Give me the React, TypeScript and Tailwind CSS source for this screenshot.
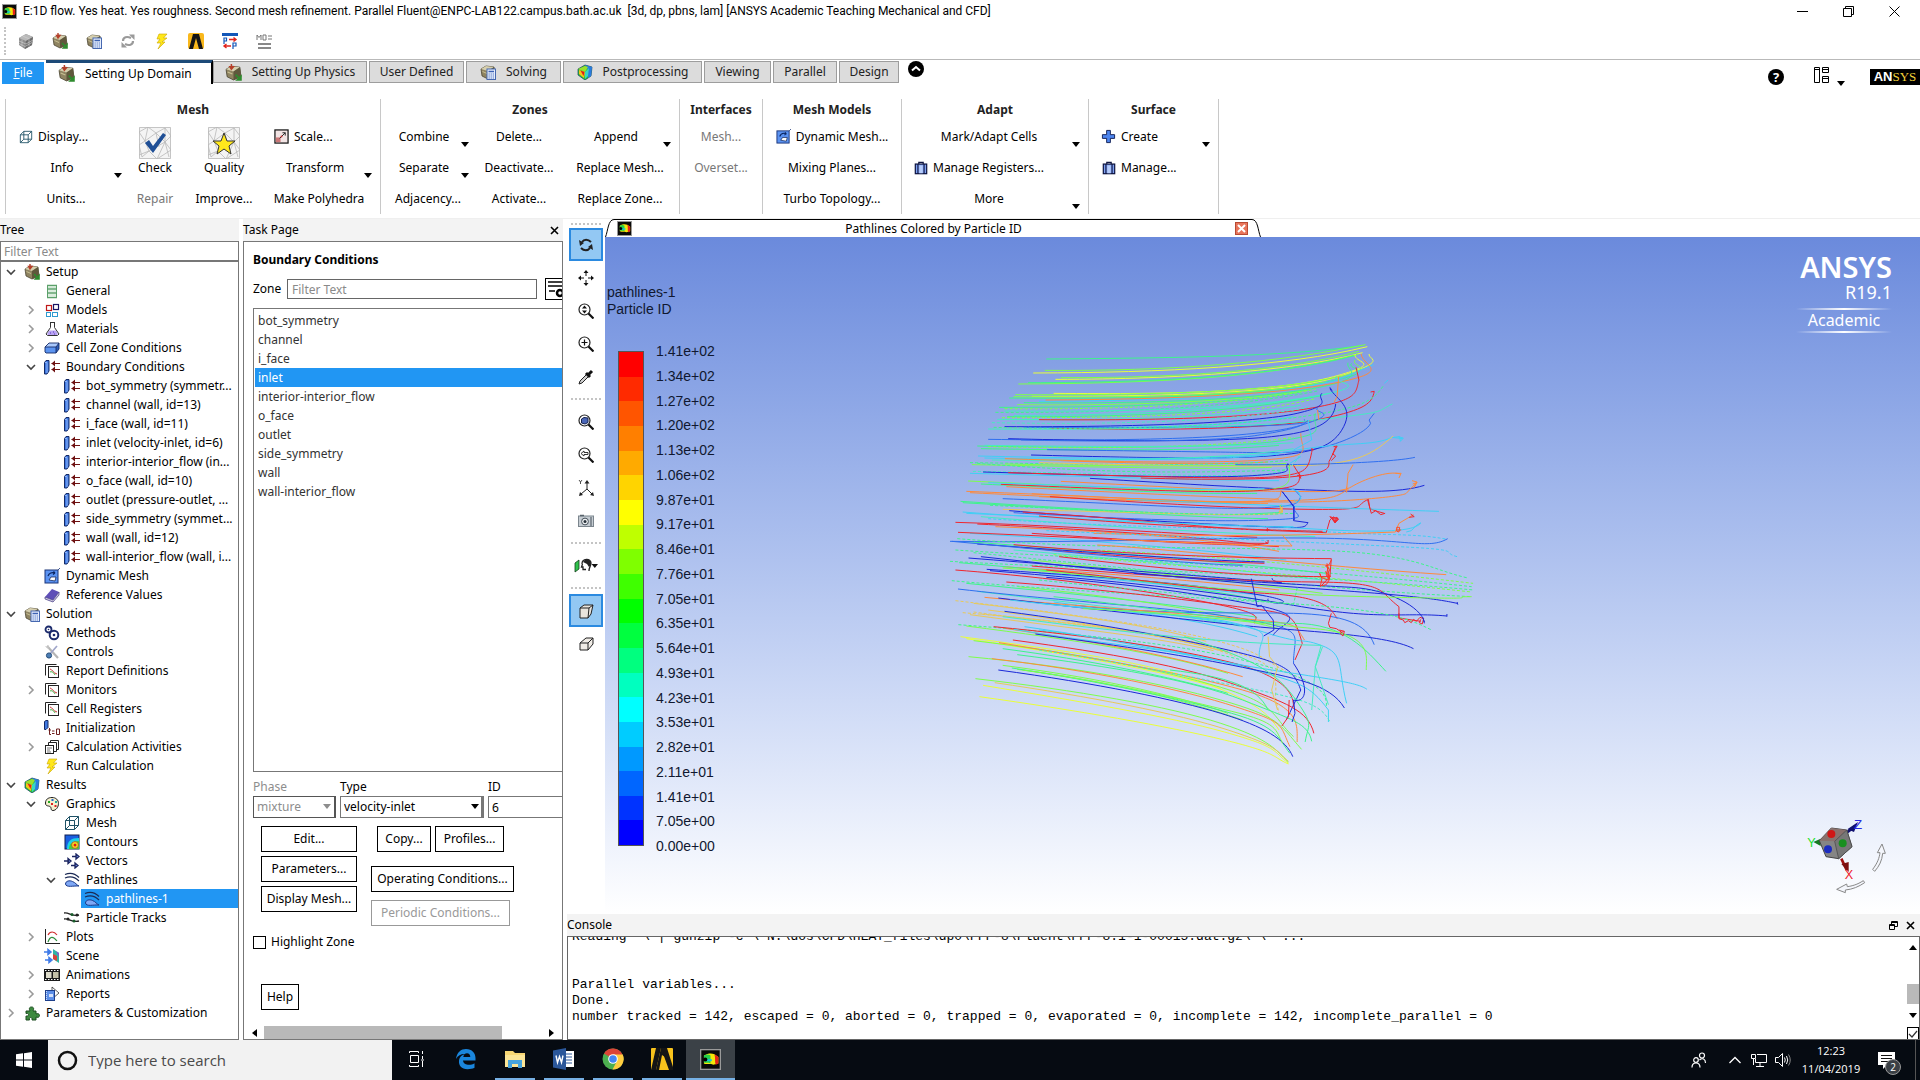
import React from "react";

type IconProps = { size?: number; className?: string };

function Svg({ size = 16, box = 16, className = "", children }: IconProps & { box?: number; children?: React.ReactNode }) {
  return (
    <svg width={size} height={size} viewBox={`0 0 ${box} ${box}`} className={`shrink-0 ${className}`} fill="none" aria-hidden="true">
      {children}
    </svg>
  );
}

const BrickCube = (p: IconProps) => (
  <Svg {...p}>
    <path d="M1 5 8 1l7 3-1 8-7 4-6-4z" fill="#8e8e8e" />
    <path d="M1 5 8 1l7 3-7 4z" fill="#b9b9b9" />
    <path d="m8 8 7-4-1 8-7 4z" fill="#6c6c6c" />
    <path d="M1 8l7 3 7-4M1 10.500l6 3 7-4M4 6.500v7M11 6.500v7M4.500 3l7 3" stroke="#d4d4d4" strokeWidth=".6" />
  </Svg>
);
const TanCube = () => (
  <>
    <path d="M1 5 6 2l8 1 1 9-7 3-6-3z" fill="#8f8462" stroke="#3f3a26" strokeWidth=".7" />
    <path d="M1 5 6 2l8 1-6 4z" fill="#d6cfae" />
    <path d="m8 7 6-4 1 9-7 3z" fill="#5f583c" />
    <path d="M2.500 7.500 7 9.500" stroke="#c9c093" />
  </>
);
const SetupIcon = (p: IconProps) => (
  <Svg {...p}>
    <TanCube />
    <path d="M6 0v3M4.500 2.500l1.500 2.500 2-2.500z" stroke="#b5402a" strokeWidth="1.400" fill="#b5402a" />
    <path d="M10 10l4 4M15 11.500v3.500h-3.500z" stroke="#2e8b2e" strokeWidth="1.600" fill="#2e8b2e" />
  </Svg>
);
const SolutionIcon = (p: IconProps) => (
  <Svg {...p}>
    <TanCube />
    <rect x="7" y="5" width="8.500" height="10.500" fill="#e6eefc" stroke="#4668b0" />
    <path d="M8.500 7.500h5.500" stroke="#3c62b4" strokeWidth="1.500" />
    <path d="M8.500 10h5.500M8.500 12h5.500M8.500 14h5.500" stroke="#5579c6" strokeDasharray="1.300 .8" />
  </Svg>
);
const ResultsIcon = (p: IconProps) => (
  <Svg {...p}>
    <path d="M1 5 8 1l7 2-1 9-6 4-7-5z" fill="#27c23a" stroke="#1a3b66" strokeWidth=".7" />
    <path d="M8 1l7 2-1 9-3 2V6z" fill="#2a7be0" />
    <path d="M1 5 8 2l3 1-3 5z" fill="#9be02d" />
    <path d="M8 8l4-4-1 8-3 3z" fill="#39d7c3" />
    <path d="M2 6l6 2-1 6-5-4z" fill="#f5c518" />
    <path d="M3.500 6.500 7.500 8 6.500 12z" fill="#e01b1b" />
  </Svg>
);
const RefreshGray = (p: IconProps) => (
  <Svg {...p}>
    <path d="M3 8c0-4 4-5 8-3M13 8c0 4-4 5-8 3" stroke="#9a9a9a" strokeWidth="2.200" />
    <path d="M9 1.500h5.500V7zM7 14.500H1.500V9z" fill="#9a9a9a" />
  </Svg>
);
const Bolt = (p: IconProps) => (
  <Svg {...p}>
    <path d="M5 1h8L9.500 5H13L8 9h3l-7 7 3-6H3l3-4H3z" fill="#ffe71a" stroke="#c9a400" strokeWidth=".6" />
  </Svg>
);
const AnsysA = (p: IconProps) => (
  <Svg {...p}>
    <rect x="0" y="0" width="16" height="16" rx="2" fill="#f9b81c" />
    <path d="M1 16 5 1h6l4 15h-4L8 5 5 16z" fill="#151515" />
  </Svg>
);
const PpIcon = (p: IconProps) => (
  <Svg {...p}>
    <path d="M0 1.500h16" stroke="#1357b8" strokeWidth="3" />
    <path d="M2 11V5h2.500v3H2M11 16v-6h3v3h-3" stroke="#1357b8" strokeWidth="1.200" />
    <path d="M7 6.500h7M11.500 4.500l2.500 2-2.500 2M9 13H2M4.500 11 2 13l2.500 2" stroke="#e0231b" strokeWidth="1.400" />
  </Svg>
);
const MonIcon = (p: IconProps) => (
  <Svg {...p}>
    <path d="M1 7V2l2 2.500L5 2v5M7 2h3v5H7zM12 3h4M12 6h4" stroke="#777" />
    <path d="M2 11h13M2 15h13" stroke="#888" strokeWidth="2" />
  </Svg>
);
const FluentIcon = (p: IconProps) => (
  <Svg {...p}>
    <rect x=".5" y=".5" width="15" height="15" fill="#0a0a0a" stroke="#9a9a9a" />
    <path d="M3 5c3-2 6-2 8-1l3 2v5l-4 1c-2-1-5 0-7-1z" fill="#f4e80a" />
    <path d="M3 5c2-1 4-1 5 0v6c-2-1-4 0-5-1z" fill="#25d04b" />
    <path d="M11 4l3 2v5l-2 1c-1-2 0-5-1-8z" fill="#e6241a" />
    <path d="M4 8.500h5" stroke="#14c4e0" strokeWidth="1.500" />
    <circle cx="4" cy="8" r="1.600" fill="#000" />
  </Svg>
);
const WireCube = (p: IconProps) => (
  <Svg {...p}>
    <path d="M1.500 5.500h9v9h-9zM5.500 1.500h9v9h-9zM1.500 5.500l4-4M10.500 5.500l4-4M1.500 14.500l4-4M10.500 14.500l4-4" stroke="#1f5266" />
  </Svg>
);
const ScaleIcon = (p: IconProps) => (
  <Svg {...p}>
    <rect x="1" y="1" width="14" height="14" fill="#f2e4e4" stroke="#111" strokeWidth="1.300" />
    <rect x="2" y="9" width="5" height="5" fill="#c77" />
    <path d="M6 10 12 4M9 4h3v3" stroke="#222" />
    <circle cx="8" cy="8" r="1" fill="#b22" />
  </Svg>
);
const MeshBack = () => (
  <>
    <rect width="32" height="32" fill="#f4f4f4" />
    <path
      d="M0 5 9 0l8 6 9-5 6 8M0 5l6 9 11-8 9 9 6-6M0 18l6-4 4 10 16-9 6 8M0 18l3 12 7-6 8 8 8-17 4 15M9 0l-3 14M17 6l3 14M0 28l10-4M32 23l-14 9M26 1v14M.5.5v31M31.500.5v31M.5 31.500h31M.5.5h31"
      stroke="#b9b9b9"
      strokeWidth=".8"
    />
  </>
);
const CheckBig = () => (
  <Svg size={32} box={32}>
    <MeshBack />
    <path d="M6 16l4-3 4 6L24 6l3 2-13 18z" fill="#1f4f96" />
  </Svg>
);
const StarBig = () => (
  <Svg size={32} box={32}>
    <MeshBack />
    <path d="M16 6l3 8h8l-6 5 2 8-7-5-7 5 2-8-6-5h8z" fill="#ffe81c" stroke="#333" />
  </Svg>
);
const DynMesh = (p: IconProps) => (
  <Svg {...p}>
    <rect x="1" y="2" width="13" height="13" fill="#5b93f2" stroke="#1a3478" />
    <path d="M14 2l2-2" stroke="#1a3478" strokeWidth=".8" />
    <path d="M4 8c1-3 4-4 7-3L9.500 3.500M11 5 9 6.500" stroke="#0b2560" strokeWidth="1.200" />
    <path d="M5 12l2-3h5l-1 4z" fill="#fff" stroke="#16295c" strokeWidth=".8" />
  </Svg>
);
const Briefcase = (p: IconProps) => (
  <Svg {...p}>
    <path d="M5.500 4V1.500h5V4" stroke="#0e1440" strokeWidth="1.400" />
    <rect x="1.500" y="3.500" width="13" height="11" fill="#7da0f2" stroke="#0e1440" strokeWidth="1.400" />
    <path d="M6 5h4v9H6z" fill="#b7cdfb" />
    <path d="M4.500 3.500v11M11.500 3.500v11" stroke="#0e1440" strokeWidth="1.300" />
  </Svg>
);
const PlusIcon = (p: IconProps) => (
  <Svg {...p}>
    <path d="M6 1.500h4V6h4.500v4H10v4.500H6V10H1.500V6H6z" fill="#4d85ee" stroke="#101f55" />
  </Svg>
);
const GeneralIcon = (p: IconProps) => (
  <Svg {...p}>
    <path d="M3.500 2v13M12.500 2v13" stroke="#5ba06a" />
    <path d="M3 2.500h10M3 6h10M3 10h10M3 14.500h10" stroke="#5ba06a" strokeWidth="1.600" />
    <path d="M4 4.200h8M4 8h8M4 12h8" stroke="#cfe8d4" strokeWidth="1.500" />
  </Svg>
);
const ModelsIcon = (p: IconProps) => (
  <Svg {...p}>
    <rect x="2.500" y="3.500" width="5" height="5" stroke="#c01818" strokeWidth="1.200" />
    <rect x="9.500" y="2.500" width="5" height="5" stroke="#1b1464" strokeWidth="1.200" />
    <rect x="2.500" y="10.500" width="4" height="4" stroke="#2e9ad0" />
    <rect x="8.500" y="10.500" width="5" height="4" stroke="#2e9ad0" />
  </Svg>
);
const Flask = (p: IconProps) => (
  <Svg {...p}>
    <path d="M5 9.500h7l2 3.500-1 1H4l-1-1z" fill="#b9a4f2" />
    <path d="M6 1.500h5M6.500 2v4.500L2 13l1.500 1.500h10L15 13l-4.500-6.500V2" stroke="#333" />
    <path d="M6 12h1M9 11h1M10 13h1" stroke="#5a35c0" />
  </Svg>
);
const CellZone = (p: IconProps) => (
  <Svg {...p}>
    <path d="M1 7l4-4h10l-3 4z" fill="#a9c8fb" />
    <path d="M1 7h11v6H2L1 12z" fill="#5c94f0" />
    <path d="M12 7l3-4v6l-3 4z" fill="#2b5cb8" />
    <path d="M1 7l4-4h10v6l-3 4H2L1 12zM1 7h11v6M12 7l3-4" stroke="#142a66" strokeWidth=".9" />
  </Svg>
);
const Boundary = (p: IconProps) => (
  <Svg {...p}>
    <path d="M.5 3.500 2 1.500h3V12l-2 3H.5z" fill="#3f78e0" stroke="#142a66" />
    <path d="M1 3.500h2V14" stroke="#8fb4f7" />
    <path d="M7.500 4.500H16M7.500 10.500H16" stroke="#6e1010" strokeWidth="1.200" />
    <path d="M11 1.500v6l-3.500-3zM11 7.500v6l-3.500-3z" fill="#6e1010" />
  </Svg>
);
const Book = (p: IconProps) => (
  <Svg {...p}>
    <path d="M1 10 8 2l7 3-6 8z" fill="#5f4fb8" />
    <path d="M1 10l8 3 6-8v3l-6 7-8-3z" fill="#cfcadf" stroke="#3b3080" strokeWidth=".7" />
  </Svg>
);
const Gears = (p: IconProps) => (
  <Svg {...p}>
    <circle cx="4.500" cy="4.500" r="3" stroke="#1b2a6b" strokeWidth="1.800" />
    <circle cx="10" cy="10" r="4.300" stroke="#1b2a6b" strokeWidth="2" fill="#fff" />
    <circle cx="10" cy="10" r="1.300" fill="#1b2a6b" />
    <circle cx="4.500" cy="4.500" r=".8" fill="#1b2a6b" />
  </Svg>
);
const Tools = (p: IconProps) => (
  <Svg {...p}>
    <path d="M3 2l11 12" stroke="#b5b5b5" strokeWidth="2.200" />
    <path d="M13 2 6 10" stroke="#9fa5c9" strokeWidth="1.600" />
    <circle cx="5" cy="11.500" r="2.600" fill="#4d7fb5" stroke="#29507c" />
    <path d="M1.500 2.500l3 2M4 1v3" stroke="#c9c9c9" />
  </Svg>
);
const Report = (p: IconProps) => (
  <Svg {...p}>
    <path d="M1.500 12.500v-11h11" stroke="#222" />
    <rect x="4.500" y="3.500" width="10" height="11" fill="#fdfdfd" stroke="#222" />
    <path d="M6 6c2 0 3 4 7 5" stroke="#c33" />
    <path d="M6 9c2-1 4 1 5 3" stroke="#3a3" />
  </Svg>
);
const InitIcon = (p: IconProps) => (
  <Svg {...p}>
    <path d="M.5 1.500 2 .5h2v7l-2 2H.5z" fill="#3f78e0" stroke="#142a66" />
    <path d="M5.500 8v6.500h1.500M4.500 10h2.500M8 11h2.500M8 13.500h2.500M12.500 9h3v5.500h-3z" stroke="#6e1f1f" />
  </Svg>
);
const CalcAct = (p: IconProps) => (
  <Svg {...p}>
    <path d="M6.500 4V1.500h8v9H12" stroke="#222" />
    <path d="M4.500 6V3.500h8v9H10" stroke="#222" fill="#fff" />
    <rect x="1.500" y="6.500" width="8" height="8" fill="#fff" stroke="#222" />
    <path d="M3 9h5M3 11h3M3 13h4" stroke="#777" />
  </Svg>
);
const Palette = (p: IconProps) => (
  <Svg {...p}>
    <path d="M8 1.500c4 0 6.500 2.500 6.500 6S12 14.500 9 14.500s-1-3-3-4-4.500 0-4.500-3.500S4 1.500 8 1.500z" fill="#f5f0cf" stroke="#222" />
    <path d="M4 5h2v2H4z" fill="#2a2" />
    <path d="M7.500 3h2v2h-2z" fill="#26c" />
    <path d="M11 5h2v2h-2z" fill="#2a9" />
    <path d="M7 7h2v2H7z" fill="#d22" />
    <path d="M10.500 9h2v2h-2z" fill="#d22" />
  </Svg>
);
const Contours = (p: IconProps) => (
  <Svg {...p}>
    <rect x="1" y="1" width="14" height="14" fill="#1a5fe0" stroke="#0e1f55" />
    <path d="M3 15C3 7 7 4 15 4v11z" fill="#1fd2e6" />
    <path d="M5 15c0-5 3-8 10-8v8z" fill="#3fd23f" />
    <circle cx="11" cy="11" r="3.400" fill="#f8e71c" stroke="#a33" strokeWidth=".7" />
    <circle cx="11" cy="11" r="1.500" fill="#e01b1b" />
  </Svg>
);
const Vectors = (p: IconProps) => (
  <Svg {...p}>
    <path d="M0 8h5M4 5.500 7 8l-3 2.500zM8 3.500h4M12 1l3 2.500L12 6zM7 12.500h4M11 10l3 2.500-3 2.500z" stroke="#1b2560" strokeWidth="1.300" fill="#6f8fe6" />
  </Svg>
);
const PathIcon = (p: IconProps) => (
  <Svg {...p}>
    <path d="M1 2.500c5-2 10-1 14 3M1 6c5-2 10-1 14 3" stroke="#1b2a55" strokeWidth="1.200" />
    <path d="M1.500 12c0-3 4-4 7-2.500 3 1 4 3.500 6.500 4.500-5-.5-13 2-13.500-2z" fill="#7fa8f5" stroke="#1b3a8a" />
  </Svg>
);
const Particle = (p: IconProps) => (
  <Svg {...p}>
    <path d="M0 3c5-1 8 4 15 2M0 9c5-1 8 4 15 2" stroke="#222" strokeWidth="1.400" />
    <circle cx="8" cy="4.500" r="1.500" fill="#175d2a" />
    <circle cx="13" cy="5" r="1.500" fill="#222" />
    <circle cx="4" cy="9" r="1.500" fill="#222" />
    <circle cx="10" cy="11" r="1.500" fill="#175d2a" />
  </Svg>
);
const Plots = (p: IconProps) => (
  <Svg {...p}>
    <path d="M1.500 0v14.500H16" stroke="#222" />
    <path d="M4 6c2-4 6-4 9 0" stroke="#d03030" strokeWidth="1.200" />
    <path d="M4 13c2-6 5-6 9-1" stroke="#2d8d3c" strokeWidth="1.200" />
  </Svg>
);
const Scene = (p: IconProps) => (
  <Svg {...p}>
    <path d="M0 4h5M4 1.500 7 4 4 6.500zM1 12h5M5 9.500 8 12l-3 2.500z" stroke="#3f7be8" strokeWidth="1.500" fill="#3f7be8" />
    <path d="M9 1l6 4v10l-6-4z" fill="#2fb5a5" />
    <path d="M9 6l4 2v5l-4-2z" fill="#d8433b" />
    <path d="M12 3l3 2v4z" fill="#8b57c9" />
  </Svg>
);
const Film = (p: IconProps) => (
  <Svg {...p}>
    <rect x="0" y="2" width="16" height="12" fill="#1b1b1b" />
    <rect x="2" y="5" width="5.500" height="6" fill="#dedccb" />
    <rect x="9" y="5" width="5.500" height="6" fill="#c4c1a8" />
    <path d="M1 3.500h14M1 12.500h14" stroke="#fff" strokeDasharray="1.500 1.500" />
  </Svg>
);
const ReportsIcon = (p: IconProps) => (
  <Svg {...p}>
    <path d="M8 1l7 6-7 6z" fill="#fff" stroke="#333" strokeWidth=".8" />
    <rect x="1.500" y="4.500" width="9" height="10" fill="#5d8fe8" stroke="#1e3f8a" />
    <path d="M5 8h4v3H5z" fill="#d3e1fb" />
    <path d="M2.500 5v9" stroke="#cfdcf7" strokeDasharray="1 1" />
  </Svg>
);
const Puzzle = (p: IconProps) => (
  <Svg {...p}>
    <path d="M2 6h4c-1-2-1-4 1.500-4S10 4 9 6h3v3c2-1 3.500 0 3.500 1.500S14 13 12 12v3H8c.5-2-.5-2.500-1.500-2.500S5 13 5.500 15H2v-4c2 .5 2.500-.5 2.500-1.500S4 8 2 8.500z" fill="#3d8a3f" stroke="#1c4d20" />
  </Svg>
);

/* ---------- data ---------- */

type Node = { label: string; icon: React.FC<IconProps>; level: 0 | 1 | 2 | 3; open?: boolean; closed?: boolean; selected?: boolean };

const tree: Node[] = [
  { label: "Setup", icon: SetupIcon, level: 0, open: true },
  { label: "General", icon: GeneralIcon, level: 1 },
  { label: "Models", icon: ModelsIcon, level: 1, closed: true },
  { label: "Materials", icon: Flask, level: 1, closed: true },
  { label: "Cell Zone Conditions", icon: CellZone, level: 1, closed: true },
  { label: "Boundary Conditions", icon: Boundary, level: 1, open: true },
  { label: "bot_symmetry (symmetr...", icon: Boundary, level: 2 },
  { label: "channel (wall, id=13)", icon: Boundary, level: 2 },
  { label: "i_face (wall, id=11)", icon: Boundary, level: 2 },
  { label: "inlet (velocity-inlet, id=6)", icon: Boundary, level: 2 },
  { label: "interior-interior_flow (in...", icon: Boundary, level: 2 },
  { label: "o_face (wall, id=10)", icon: Boundary, level: 2 },
  { label: "outlet (pressure-outlet, ...", icon: Boundary, level: 2 },
  { label: "side_symmetry (symmet...", icon: Boundary, level: 2 },
  { label: "wall (wall, id=12)", icon: Boundary, level: 2 },
  { label: "wall-interior_flow (wall, i...", icon: Boundary, level: 2 },
  { label: "Dynamic Mesh", icon: DynMesh, level: 1 },
  { label: "Reference Values", icon: Book, level: 1 },
  { label: "Solution", icon: SolutionIcon, level: 0, open: true },
  { label: "Methods", icon: Gears, level: 1 },
  { label: "Controls", icon: Tools, level: 1 },
  { label: "Report Definitions", icon: Report, level: 1 },
  { label: "Monitors", icon: Report, level: 1, closed: true },
  { label: "Cell Registers", icon: Report, level: 1 },
  { label: "Initialization", icon: InitIcon, level: 1 },
  { label: "Calculation Activities", icon: CalcAct, level: 1, closed: true },
  { label: "Run Calculation", icon: Bolt, level: 1 },
  { label: "Results", icon: ResultsIcon, level: 0, open: true },
  { label: "Graphics", icon: Palette, level: 1, open: true },
  { label: "Mesh", icon: WireCube, level: 2 },
  { label: "Contours", icon: Contours, level: 2 },
  { label: "Vectors", icon: Vectors, level: 2 },
  { label: "Pathlines", icon: PathIcon, level: 2, open: true },
  { label: "pathlines-1", icon: PathIcon, level: 3, selected: true },
  { label: "Particle Tracks", icon: Particle, level: 2 },
  { label: "Plots", icon: Plots, level: 1, closed: true },
  { label: "Scene", icon: Scene, level: 1 },
  { label: "Animations", icon: Film, level: 1, closed: true },
  { label: "Reports", icon: ReportsIcon, level: 1, closed: true },
  { label: "Parameters & Customization", icon: Puzzle, level: 0, closed: true },
];

const indent = ["pl-0", "pl-5", "pl-10", "pl-[60px]"];

const zones = ["bot_symmetry", "channel", "i_face", "inlet", "interior-interior_flow", "o_face", "outlet", "side_symmetry", "wall", "wall-interior_flow"];

const scaleLabels = [
  "1.41e+02", "1.34e+02", "1.27e+02", "1.20e+02", "1.13e+02", "1.06e+02", "9.87e+01", "9.17e+01", "8.46e+01", "7.76e+01", "7.05e+01",
  "6.35e+01", "5.64e+01", "4.93e+01", "4.23e+01", "3.53e+01", "2.82e+01", "2.11e+01", "1.41e+01", "7.05e+00", "0.00e+00",
];

const bands = [
  "bg-[#ff0000]", "bg-[#ff2a00]", "bg-[#ff5500]", "bg-[#ff7f00]", "bg-[#ffaa00]", "bg-[#ffd400]", "bg-[#ffff00]", "bg-[#bfff00]", "bg-[#7fff00]", "bg-[#3fff00]",
  "bg-[#00ff00]", "bg-[#00ff3f]", "bg-[#00ff7f]", "bg-[#00ffbf]", "bg-[#00ffff]", "bg-[#00ccff]", "bg-[#0099ff]", "bg-[#0066ff]", "bg-[#0033ff]", "bg-[#0000ff]",
];

const G = "#3df58a", LG = "#7dff4a", Y = "#eaff38", GD = "#e8c95a", O = "#ff8a3c", R = "#f0262e", B = "#1a28d8", MB = "#2f6ff0", C = "#3fd0f5", T = "#45ecc0";

const lines: [string, string, number?][] = [
  [G, "M320 87C700 84 1000 78 1190 46"],
  [Y, "M284 129C640 128 980 110 1203 50"],
  [LG, "M316 121C660 124 960 98 1198 44"],
  [Y, "M345 148C700 148 1000 122 1190 68"],
  [LG, "M360 143C720 144 1000 116 1180 64"],
  [LG, "M243 162C620 160 950 142 1178 72"],
  [G, "M270 158C640 158 960 136 1172 76"],
  [Y, "M340 190C680 194 960 184 1110 140S1160 100 1170 72"],
  [Y, "M280 199C640 200 980 190 1124 140S1204 90 1208 72"],
  [LG, "M235 194C620 196 900 186 1080 150S1150 110 1170 90"],
  [G, "M218 204C600 208 880 198 1070 160S1140 120 1160 100"],
  [LG, "M230 200C640 204 900 194 1090 156"],
  [G, "M258 218C620 222 880 208 1050 176S1140 120 1150 98"],
  [C, "M300 214C640 212 940 200 1120 150L1220 104"],
  [O, "M318 210C640 208 940 196 1110 160S1190 110 1186 72"],
  [LG, "M205 236C560 240 860 220 1060 178", 1],
  [G, "M180 247C560 250 860 228 1070 182", 1],
  [T, "M205 243C560 246 860 236 1050 200S1100 160 1118 140"],
  [G, "M212 260C560 262 860 246 1080 196"],
  [LG, "M198 263C540 264 880 256 1060 206", 1],
  [T, "M230 256C560 256 880 240 1100 190"],
  [R, "M300 269C640 272 900 262 1040 236S1170 190 1180 150L1172 112"],
  [R, "M330 294C680 304 960 294 1080 266S1216 220 1222 184L1212 186"],
  [B, "M205 290C560 292 900 278 1010 250S1060 210 1078 190"],
  [MB, "M258 292C600 296 900 290 980 284S1026 276 1030 268"],
  [T, "M170 278C560 286 860 270 1040 232", 1],
  [T, "M160 297C560 300 900 292 1080 268S1220 250 1272 222"],
  [G, "M175 292C560 304 920 280 1060 254S1220 210 1248 166", 1],
  [MB, "M160 328C560 334 900 326 1020 286S1050 250 1066 234"],
  [B, "M215 326C560 336 820 334 940 320S1110 280 1116 222"],
  [MB, "M250 330C600 338 820 330 900 316S1030 290 1040 270"],
  [G, "M130 348C520 356 860 352 980 330S1050 300 1060 250"],
  [LG, "M160 350C560 360 860 344 1000 322", 1],
  [T, "M150 346C560 352 840 350 1000 338"],
  [MB, "M322 359C640 364 800 366 900 368S1040 362 1080 352S1200 310 1212 280L1208 270 1222 250"],
  [B, "M278 375C600 384 800 388 930 378S1110 350 1138 290S1120 210 1100 176"],
  [C, "M132 378C540 388 860 390 1000 362S1220 350 1270 322L1300 326"],
  [C, "M150 384C560 392 820 390 960 372"],
  [T, "M170 390C560 394 840 384 1000 356"],
  [G, "M110 398C500 404 860 408 990 390", 1],
  [GD, "M300 398C600 406 900 412 1040 406S1220 370 1274 318"],
  [LG, "M206 402C560 410 860 410 980 400"],
  [MB, "M840 404C1000 406 1260 400 1334 382"],
  [O, "M206 386C560 398 820 400 940 388S1020 360 1020 310"],
  [T, "M118 424C500 430 780 440 880 436S1000 410 1020 370", 1],
  [B, "M146 426C520 438 780 446 900 436S970 420 984 402"],
  [R, "M215 428C560 438 860 450 950 440S1040 420 1052 356"],
  [R, "M580 444C760 450 940 450 1030 436S1090 400 1100 390L1108 372 1116 350"],
  [G, "M130 400C480 430 700 430 980 420", 1],
  [B, "M440 445C700 462 820 470 1000 478S1290 490 1360 466"],
  [O, "M360 454C640 470 860 484 960 484S1130 490 1160 470S1260 420 1294 432"],
  [LG, "M105 453C500 472 780 488 890 482S990 460 988 402"],
  [R, "M195 463C560 480 800 490 900 482S1020 470 1016 434L1000 406"],
  [C, "M160 458C520 472 760 484 920 476"],
  [O, "M100 484C480 500 780 520 880 516S960 500 966 480"],
  [O, "M280 491C560 506 780 520 930 514S1110 510 1146 480L1150 430 1164 404"],
  [O, "M300 500C600 516 860 516 1000 516S1300 500 1310 490L1340 456"],
  [R, "M330 500C620 520 860 536 1040 538S1160 530 1206 508L1210 536 1230 544 1250 550"],
  [MB, "M200 506C520 520 780 540 900 534S1010 520 1020 500L1000 476"],
  [C, "M540 508C760 518 1000 530 1400 544"],
  [G, "M84 514C460 540 740 560 880 552S950 550 966 524"],
  [GD, "M200 538C560 546 760 556 880 554S960 550 970 530"],
  [G, "M165 526C520 544 800 560 1000 550", 1],
  [B, "M218 542C560 572 800 584 920 590S1030 592 1040 578L1000 572 1002 530 968 484"],
  [MB, "M230 548C560 570 800 576 930 570S1000 560 1000 530"],
  [R, "M255 546C560 566 720 590 900 600L1090 608 1100 570 1110 560"],
  [C, "M90 546C500 580 800 580 1040 596S1330 600 1350 580"],
  [C, "M160 566C560 596 900 594 1100 606S1330 610 1424 628", 1],
  [R, "M300 558C640 590 900 600 1080 604"],
  [R, "M70 577C400 588 700 614 900 622"],
  [R, "M130 582C460 600 740 620 900 644L930 640"],
  [R, "M77 607C420 622 660 640 920 640"],
  [O, "M450 610C760 620 1000 618 1280 606L1290 580 1330 554"],
  [MB, "M55 634C420 640 760 622 1040 624S1370 660 1424 626"],
  [C, "M320 602C700 620 1100 640 1290 650S1400 666 1450 680", 1],
  [G, "M75 626C480 660 860 650 1100 662S1380 720 1480 744", 1],
  [R, "M280 610C600 634 760 644 900 646L960 650"],
  [O, "M500 628C720 638 860 646 996 648L970 616"],
  [O, "M460 645C700 660 1040 706 1420 734"],
  [LG, "M460 660C800 680 1100 710 1494 760", 1],
  [G, "M70 660C480 690 900 700 1490 770", 1],
  [R, "M230 644C560 676 860 684 1104 686L1100 740 1074 770"],
  [R, "M250 652C560 684 760 694 920 700"],
  [B, "M130 642C460 668 720 690 920 696"],
  [MB, "M60 634C420 670 680 700 860 706"],
  [G, "M55 694C480 720 1000 730 1496 780", 1],
  [LG, "M340 674C720 712 1100 740 1490 786", 1],
  [G, "M120 668C560 716 1100 780 1490 800", 1],
  [B, "M140 680C480 720 800 756 1060 776S1390 806 1450 820"],
  [B, "M106 684C480 716 720 736 880 750S930 760 942 744"],
  [R, "M280 708C600 738 860 754 1060 756S1230 780 1290 830L1290 864 1350 874"],
  [R, "M355 680C640 716 860 740 1100 740"],
  [B, "M156 718C500 742 700 760 880 790S920 830 930 806"],
  [B, "M165 722C500 752 760 780 1000 826S1300 846 1422 858"],
  [B, "M560 730C800 752 1060 766 1160 772S1350 830 1360 876"],
  [LG, "M200 714C560 742 800 790 1200 800S1400 800 1490 800"],
  [R, "M70 720C400 748 700 800 820 830S880 870 894 880"],
  [R, "M320 720C600 750 760 780 920 790S1100 830 1120 866"],
  [G, "M60 752C440 790 900 810 1100 830S1340 880 1380 900", 1],
  [R, "M210 756C520 782 720 812 860 832S1000 850 1024 940L1004 990"],
  [G, "M300 750C600 786 820 800 1000 824L1010 774", 1],
  [B, "M320 742C560 764 740 790 900 826S960 880 944 916"],
  [MB, "M77 777C420 820 720 836 880 870S1000 910 1000 1000"],
  [MB, "M400 826C640 856 860 846 1000 850S1200 880 1222 944"],
  [O, "M150 802C460 834 700 850 860 866S1000 880 1030 930"],
  [B, "M188 804C460 840 640 860 820 882S1250 910 1330 956"],
  [C, "M220 810C520 850 760 850 900 900S1010 920 1076 946S1120 1010 1146 1120"],
  [C, "M300 820C560 850 720 850 840 880S900 920 906 984"],
  [G, "M340 800C600 830 860 880 1000 880S1200 960 1254 1024"],
  [LG, "M420 836C660 846 900 880 1060 896S1200 980 1200 1020"],
  [GD, "M70 812C420 856 640 890 780 930S900 980 980 1024", 1],
  [GD, "M90 848C440 880 640 910 780 950S960 1000 950 1100L960 1150", 1],
  [GD, "M140 852C460 884 640 916 800 962", 1],
  [GD, "M120 846C460 896 660 900 840 980", 1],
  [B, "M205 844C460 880 660 920 820 960S1000 1020 1020 1080L980 1170"],
  [G, "M78 884C400 910 660 940 820 980S1100 1060 1090 1130", 1],
  [T, "M200 860C560 910 800 940 1076 946L1060 1010 1050 1140"],
  [R, "M175 890C460 920 640 950 800 990S1000 1080 1000 1130"],
  [C, "M260 890C520 930 760 990 940 1020S1180 1060 1202 1078"],
  [C, "M230 898C520 950 700 960 860 1010S1040 1060 1096 1140L1096 1176"],
  [B, "M290 912C540 950 720 980 860 1012S1100 1060 1140 1134"],
  [Y, "M84 920C360 960 620 1000 760 1060S930 1150 960 1200"],
  [LG, "M120 932C400 968 640 1020 800 1072S940 1160 1000 1220"],
  [R, "M228 930C500 970 700 1010 840 1064S1040 1140 1056 1210"],
  [O, "M190 938C480 990 700 1030 860 1080S1010 1180 1010 1236"],
  [G, "M240 974C500 1010 720 1050 860 1110S1040 1180 1050 1234"],
  [T, "M300 960C540 1000 760 1050 900 1080S1080 1130 1100 1176", 1],
  [LG, "M106 980C400 1010 640 1060 800 1110S960 1180 1022 1258"],
  [O, "M170 986C440 1020 700 1080 840 1130S960 1180 990 1250"],
  [G, "M225 1014C480 1056 700 1110 830 1150S960 1230 990 1270"],
  [B, "M188 1020C460 1060 680 1110 800 1150S980 1230 998 1280"],
  [LG, "M255 1020C500 1056 700 1110 830 1144S950 1200 970 1240"],
  [LG, "M125 1046C400 1080 660 1130 800 1180S950 1260 986 1296"],
  [GD, "M178 1058C440 1100 680 1150 820 1200S950 1260 986 1294"],
  [Y, "M146 1066C400 1112 660 1160 810 1206S940 1260 986 1300"],
  [Y, "M136 1100C400 1140 660 1190 810 1230S940 1280 986 1302"],
  [G, "M700 920C860 980 940 1010 1000 1100S1040 1180 1032 1236"],
  [G, "M660 1020C820 1040 900 1070 930 1140"],
  [T, "M1096 1124L1076 1060 1060 1010 1080 950"],
  [GD, "M930 920L934 980 956 1010 940 1080 956 1140"],
  [R, "M988 1110L986 1160 968 1188"],
  [B, "M1000 1000C1050 1080 1030 1120 1000 1110L1004 1150 996 1176"],
  [R, "M1104 850L1096 880 1100 892 1118 896 1134 908"],
  [B, "M884 746L900 830 912 826 944 870 946 900 918 918"],
  [O, "M1124 140L1120 200 1112 216M1066 240L1070 270"],
  [C, "M1040 270L1050 330 1000 360M990 400L1020 380"],
  [B, "M970 486L1000 530 1002 570M1450 816L1452 824M1422 852V860"],
];

/* Shorter streams that fill the core of the flow between the main ones. */
const coreLines: [string, string][] = [
  [G, "M190 232C540 232 840 222 1020 186"],
  [LG, "M240 224C600 228 860 212 1040 180"],
  [T, "M185 268C540 272 840 262 1020 226"],
  [C, "M340 290C620 296 860 286 1000 260"],
  [G, "M140 356C480 362 800 362 960 346"],
  [LG, "M115 404C460 410 760 420 940 412"],
  [O, "M360 392C620 402 800 404 930 396"],
  [G, "M140 462C480 480 740 494 900 490"],
  [C, "M110 430C480 440 700 450 960 452"],
  [O, "M110 488C480 508 700 520 930 520"],
  [G, "M90 518C440 540 700 562 930 566"],
  [O, "M210 470C520 488 760 500 960 508"],
  [C, "M100 550C440 566 760 590 1000 590"],
  [T, "M140 560C480 590 800 610 1060 620"],
  [O, "M180 590C500 604 760 624 960 664"],
  [C, "M110 610C440 630 760 660 980 690"],
  [G, "M90 634C460 664 760 690 1090 730"],
  [T, "M230 660C560 690 820 716 1080 750"],
  [LG, "M280 690C560 724 820 750 1080 790"],
  [O, "M200 710C480 730 760 754 960 780"],
  [G, "M80 698C440 730 720 770 920 812"],
  [C, "M300 730C560 750 760 780 920 796"],
  [G, "M100 760C440 796 700 826 900 862"],
  [LG, "M240 770C520 800 760 840 960 896"],
  [T, "M130 784C440 826 680 850 860 890"],
  [C, "M340 816C560 850 720 860 900 920"],
  [GD, "M120 820C440 860 620 890 760 934"],
  [GD, "M160 840C440 880 640 916 820 966"],
  [GD, "M110 854C420 900 620 920 780 962"],
  [LG, "M100 888C400 930 640 970 820 1030"],
  [C, "M300 900C540 930 700 970 880 1010"],
  [O, "M200 894C480 940 680 980 860 1040"],
  [Y, "M100 926C360 970 640 1020 800 1076"],
  [G, "M200 956C440 990 660 1040 820 1090"],
  [LG, "M200 1006C440 1040 660 1090 820 1150"],
  [LG, "M240 1018C500 1056 700 1110 860 1170"],
];

const scribbles: [string, string][] = [
  ["#f0262e", "M1100 560l14 16 4-14 6 6-10 10-8-16zM1110 562l12 4-8 12zM1104 564h18l-8 14z"],
  ["#ff4a24", "M1284 592l8 0-2 14-6-2zM1282 600h14"],
  ["#f0262e", "M1110 350l10-2-4 8-8 16 8 6-12 14M1322 552l10 8-14 2"],
  ["#ff3a24", "M1104 690l-6 14-10 4 12 10-6 14 8 6-8 12-18-8-4-12 6 16-4 22 16-4 8-14-8-16 6-24M1092 700l6 50M1088 724l12 24"],
  ["#f0262e", "M1290 850l0 16 12 4 4 8 10-6 8 6 6-10 8 6 10-12 10 4-4 16-8-4 4-10"],
  ["#1a28d8", "M1356 862l4 18"],
  ["#f0262e", "M1126 900l14 4-4 14-8-8 10-6"],
  ["#ff8a3c", "M1326 452l14 4-8 16 6-14-10 4M1280 430l16 0-6 14M1146 470v18M1142 480h10"],
  ["#3fd0f5", "M1288 320l14 4-8 10-2-14-16 2M1260 150l-10 10"],
  ["#f0262e", "M928 594v10M924 600l10-2M930 630v10l-8-4M1204 510l10 40 12-8 14 12 12-4"],
  ["#f0262e", "M1016 430l4 16M1010 436l12 2M1048 356l8 4"],
  ["#ffb63c", "M962 526l8 20-10 0 10-16"],
  ["#1a28d8", "M1100 172l6 10M984 400l4 6"],
  ["#3fd0f5", "M988 474l26 12 6 20-10 12-8-8M1350 578l-14 10-12 14-14 4"],
];

/* ---------- small parts ---------- */

const Caret = ({ className = "" }: { className?: string }) => (
  <svg width="8" height="5" viewBox="0 0 8 5" className={`shrink-0 ${className}`} aria-hidden="true">
    <path d="M0 0h8L4 5z" fill="currentColor" />
  </svg>
);

function Item({ label, icon, caret, disabled, start = "justify-center" }: { label: string; icon?: React.ReactNode; caret?: boolean; disabled?: boolean; start?: string }) {
  return (
    <button disabled={disabled} className={`flex h-[31px] w-full items-center whitespace-nowrap ${disabled ? "text-[#777]" : ""}`}>
      <span className={`flex flex-1 items-center gap-[5px] ${start}`}>
        {icon}
        {label}
      </span>
      {caret && <Caret className="mt-4" />}
    </button>
  );
}

function Group({ title, children, className = "" }: { title: string; children: React.ReactNode; className?: string }) {
  return (
    <section className={`border-l border-[#c8c8c8] ${className}`}>
      <h2 className="flex h-[22px] items-center justify-center font-bold text-[#222]">{title}</h2>
      <div className="flex">{children}</div>
    </section>
  );
}

function Chevron({ open }: { open: boolean }) {
  return (
    <svg width="10" height="10" viewBox="0 0 10 10" fill="none" aria-hidden="true">
      <path d={open ? "M1 3l4 4 4-4" : "M3 1l4 4-4 4"} stroke={open ? "#444" : "#9a9a9a"} strokeWidth="1.600" />
    </svg>
  );
}

function Tab({ label, icon, className = "" }: { label: string; icon?: React.ReactNode; className?: string }) {
  return (
    <button role="tab" className={`mt-px flex h-[22px] items-center justify-center border border-[#9d9d9d] bg-[#dcdcdc] whitespace-nowrap text-[#222] ${className}`}>
      {icon}
      {label}
    </button>
  );
}

const Dots = ({ className = "" }: { className?: string }) => <div className={`w-[30px] border-t-2 border-dotted border-[#c4c4c4] ${className}`} />;

function Tool({ label, selected, children, className = "" }: { label: string; selected?: boolean; children: React.ReactNode; className?: string }) {
  return (
    <button
      aria-label={label}
      className={`flex h-[33px] w-[34px] items-center justify-center ${selected ? "border-2 border-[#2b8ae0] bg-[#93c8f3]" : ""} ${className}`}
    >
      {children}
    </button>
  );
}

const Lens = ({ children }: { children?: React.ReactNode }) => (
  <Svg>
    <circle cx="6.500" cy="6.500" r="5.500" stroke="#222" strokeWidth="1.200" fill="#fff" />
    <path d="M10.500 10.500l5 5" stroke="#111" strokeWidth="2.200" />
    {children}
  </Svg>
);

const TaskButton = ({ label, active, running, children }: { label: string; active?: boolean; running?: boolean; children: React.ReactNode }) => (
  <button aria-label={label} className={`flex h-10 w-[49px] flex-col items-center ${active ? "bg-[#3b4147]" : ""}`}>
    <span className="flex flex-1 items-center">{children}</span>
    <span className={`h-0.5 ${active ? "w-full" : "w-10"} ${running ? "bg-[#76b0e4]" : ""}`} />
  </button>
);

const boxButton = "flex h-[26px] items-center justify-center border border-black bg-white whitespace-nowrap";

/* ---------- page ---------- */

function TitleBar() {
  return (
    <header className="flex h-[22px] items-center bg-white pl-0.5 font-['Roboto',sans-serif] text-[12px]">
      <FluentIcon size={15} />
      <h1 className="ml-1.5 flex-1 whitespace-pre">
        {"E:1D flow. Yes heat. Yes roughness. Second mesh refinement. Parallel Fluent@ENPC-LAB122.campus.bath.ac.uk  [3d, dp, pbns, lam] [ANSYS Academic Teaching Mechanical and CFD]"}
      </h1>
      <div className="flex items-center gap-[35px] pr-5">
        <button aria-label="Minimize">
          <Svg size={11} box={11}><path d="M0 5.500h11" stroke="#000" /></Svg>
        </button>
        <button aria-label="Restore">
          <Svg size={11} box={11}><path d="M.5 2.500h8v8h-8zM2.500 2V.5h8v8H9" stroke="#000" /></Svg>
        </button>
        <button aria-label="Close">
          <Svg size={11} box={11}><path d="M.5.5l10 10M10.500.5l-10 10" stroke="#000" /></Svg>
        </button>
      </div>
    </header>
  );
}

function QuickBar() {
  const items: [string, React.FC<IconProps>][] = [
    ["Mesh", BrickCube], ["Setup", SetupIcon], ["Solution", SolutionIcon], ["Refresh", RefreshGray],
    ["Calculate", Bolt], ["Workbench", AnsysA], ["Parameters", PpIcon], ["Monitor", MonIcon],
  ];
  return (
    <div className="flex h-[38px] items-center border-b border-[#b9b9b9] pl-1">
      <div className="h-7 border-l-2 border-dotted border-[#c4c4c4]" />
      <div className="ml-3 flex gap-[18px]">
        {items.map(([label, Icon]) => (
          <button key={label} aria-label={label}><Icon /></button>
        ))}
      </div>
    </div>
  );
}

function Tabs() {
  return (
    <nav className="flex h-[25px] items-start">
      <button className="mt-0.5 ml-0.5 flex h-[22px] w-[42px] items-center justify-center bg-[#2196f3] text-white">
        <span><span className="underline">F</span>ile</span>
      </button>
      <div role="tablist" className="ml-0.5 flex items-start gap-0.5">
        <button role="tab" aria-selected="true" className="flex h-6 w-[167px] items-center border-t-[3px] border-r-2 border-t-[#1c4a78] border-r-black bg-white pl-3 whitespace-nowrap">
          <SetupIcon size={17} className="mr-2.5" />
          Setting Up Domain
        </button>
        <Tab label="Setting Up Physics" icon={<SetupIcon size={17} className="mr-2.5" />} className="-ml-0.5 w-[154px]" />
        <Tab label="User Defined" className="w-[95px]" />
        <Tab label="Solving" icon={<SolutionIcon size={16} className="mr-2.5" />} className="w-[95px]" />
        <Tab label="Postprocessing" icon={<ResultsIcon size={16} className="mr-2.5" />} className="w-[139px]" />
        <Tab label="Viewing" className="w-[67px]" />
        <Tab label="Parallel" className="w-16" />
        <Tab label="Design" className="w-[60px]" />
      </div>
      <button aria-label="Collapse ribbon" className="mt-px ml-[9px]">
        <Svg><circle cx="8" cy="8" r="8" fill="#000" /><path d="M4 9.500 8 6l4 3.500" stroke="#fff" strokeWidth="2" /></Svg>
      </button>
      <div className="ml-auto flex items-start pt-[9px]">
        <button aria-label="Help" className="flex size-4 items-center justify-center rounded-full bg-black text-[13px] leading-4 font-bold text-white">?</button>
        <button aria-label="Layout" className="-mt-0.5 ml-[30px] flex text-black">
          <Svg>
            <path d="M.5.5h5v15h-5zM.5 2.500h5M8.500.5h6v5h-6zM8.500 2.500h6M8.500 9.500h6v6h-6zM8.500 11.500h6" stroke="#000" />
          </Svg>
          <Caret className="mt-3.5 ml-[7px]" />
        </button>
        <div className="ml-[25px] flex h-4 w-[50px] items-center justify-center bg-black font-['Liberation_Serif',serif] text-[13px] text-[#f2d13a]">
          <b className="font-['Liberation_Sans',sans-serif] text-white">AN</b>SYS
        </div>
      </div>
    </nav>
  );
}

function Ribbon() {
  return (
    <div className="flex border-b border-[#efefef] pt-[14px] pb-1 pl-[5px]">
      <Group title="Mesh" className="w-[375px] shrink-0">
        <div className="ml-1 w-[112px]">
          <Item label="Display..." icon={<WireCube size={14} />} start="pl-[9px]" />
          <Item label="Info" caret />
          <Item label="Units..." />
        </div>
        <div className="w-[66px]">
          <button className="flex h-[62px] w-full flex-col items-center pt-1.5"><CheckBig />Check</button>
          <Item label="Repair" disabled />
        </div>
        <div className="w-[72px]">
          <button className="flex h-[62px] w-full flex-col items-center pt-1.5"><StarBig />Quality</button>
          <Item label="Improve..." />
        </div>
        <div className="ml-1.5 w-[106px]">
          <Item label="Scale..." icon={<ScaleIcon size={15} />} start="pl-2" />
          <Item label="Transform" caret />
          <Item label="Make Polyhedra" />
        </div>
      </Group>
      <Group title="Zones" className="w-[299px] shrink-0">
        <div className="flex gap-1 pl-1.5">
          <div className="w-[82px]">
            <Item label="Combine" caret />
            <Item label="Separate" caret />
            <Item label="Adjacency..." />
          </div>
          <div className="w-[92px]">
            <Item label="Delete..." />
            <Item label="Deactivate..." />
            <Item label="Activate..." />
          </div>
          <div className="w-[102px]">
            <Item label="Append" caret />
            <Item label="Replace Mesh..." />
            <Item label="Replace Zone..." />
          </div>
        </div>
      </Group>
      <Group title="Interfaces" className="w-[83px] shrink-0">
        <div className="flex-1">
          <Item label="Mesh..." disabled />
          <Item label="Overset..." disabled />
        </div>
      </Group>
      <Group title="Mesh Models" className="w-[139px] shrink-0">
        <div className="flex-1">
          <Item label="Dynamic Mesh..." icon={<DynMesh size={15} />} />
          <Item label="Mixing Planes..." />
          <Item label="Turbo Topology..." />
        </div>
      </Group>
      <Group title="Adapt" className="w-[187px] shrink-0">
        <div className="ml-1 w-[174px]">
          <Item label="Mark/Adapt Cells" caret />
          <Item label="Manage Registers..." icon={<Briefcase size={14} />} start="pl-2" />
          <Item label="More" caret />
        </div>
      </Group>
      <Group title="Surface" className="w-[130px] shrink-0">
        <div className="ml-[5px] w-[116px]">
          <Item label="Create" icon={<PlusIcon size={15} />} caret start="pl-[7px]" />
          <Item label="Manage..." icon={<Briefcase size={14} />} start="pl-2" />
        </div>
      </Group>
      <div className="border-l border-[#c8c8c8]" />
    </div>
  );
}

function TreePanel() {
  return (
    <aside className="flex w-[239px] shrink-0 flex-col bg-white">
      <h2 className="flex h-[22px] items-center bg-[#f3f3f3]">Tree</h2>
      <input aria-label="Filter tree" placeholder="Filter Text" className="h-5 w-full border border-[#777] px-[3px] outline-none placeholder:text-[#8a8a8a]" />
      <ul role="tree" className="flex-1 border border-[#777]">
        {tree.map((n, i) => {
          const Icon = n.icon;
          return (
            <li key={i} role="treeitem" aria-selected={!!n.selected} className={`flex h-[19px] items-center ${indent[n.level]}`}>
              <span className="flex w-5 shrink-0 justify-center">{(n.open || n.closed) && <Chevron open={!!n.open} />}</span>
              <span className={`flex h-full min-w-0 flex-1 items-center gap-1.5 whitespace-nowrap ${n.selected ? "bg-[#2196f3] text-white" : ""}`}>
                <Icon className="ml-[3px]" size={16} />
                <span>{n.label}</span>
              </span>
            </li>
          );
        })}
      </ul>
    </aside>
  );
}

function TaskPage() {
  return (
    <section className="ml-1 flex w-80 shrink-0 flex-col bg-white">
      <div className="flex h-[22px] items-center justify-between bg-[#f3f3f3] pr-1">
        <h2>Task Page</h2>
        <button aria-label="Close task page">
          <Svg size={9} box={9}><path d="M1 1l7 7M8 1 1 8" stroke="#000" strokeWidth="1.600" /></Svg>
        </button>
      </div>
      <div className="flex flex-1 flex-col overflow-hidden border border-[#777]">
        <div className="flex flex-1 flex-col pl-[9px]">
          <h3 className="mt-[9px] h-[18px] leading-[18px] font-bold">Boundary Conditions</h3>
          <div className="mt-[9px] flex h-[22px] items-center">
            <label htmlFor="zone" className="w-[34px] shrink-0">Zone</label>
            <input id="zone" placeholder="Filter Text" className="h-5 w-[250px] shrink-0 border border-[#666] px-1 outline-none placeholder:text-[#8a8a8a]" />
            <button aria-label="Zone list options" className="ml-2 flex h-[22px] w-6 shrink-0 items-center justify-center border border-black">
              <Svg size={20} box={20}>
                <path d="M1 3h18M1 7h18M2 12h6" stroke="#000" strokeWidth="1.500" />
                <circle cx="13" cy="14" r="3" stroke="#000" strokeWidth="2.500" />
              </Svg>
            </button>
          </div>
          <ul role="listbox" aria-label="Zones" className="mt-2 flex-1 border border-r-0 border-[#777] pt-0.5 pl-px">
            {zones.map((z) => (
              <li key={z} role="option" aria-selected={z === "inlet"} className={`h-[19px] pl-[3px] leading-[19px] ${z === "inlet" ? "bg-[#2196f3] text-white" : "text-[#333]"}`}>
                {z}
              </li>
            ))}
          </ul>
          <div className="mt-1.5 flex gap-1">
            <div className="w-[83px] shrink-0 text-[#8d8d8d]">
              <label htmlFor="phase" className="block h-[18px] leading-[18px]">Phase</label>
              <div className="relative">
                <select id="phase" disabled className="h-[22px] w-full appearance-none border border-r-2 border-[#555] bg-white pl-[3px] opacity-100">
                  <option>mixture</option>
                </select>
                <Caret className="pointer-events-none absolute top-2 right-[5px]" />
              </div>
            </div>
            <div className="w-36 shrink-0">
              <label htmlFor="type" className="block h-[18px] leading-[18px]">Type</label>
              <div className="relative">
                <select id="type" className="h-[22px] w-full appearance-none border border-r-[3px] border-[#777] bg-white pl-[3px]">
                  <option>velocity-inlet</option>
                </select>
                <Caret className="pointer-events-none absolute top-2 right-[5px]" />
              </div>
            </div>
            <div className="w-24 shrink-0">
              <label htmlFor="id" className="block h-[18px] leading-[18px]">ID</label>
              <input id="id" defaultValue="6" className="h-[22px] w-full border border-[#777] px-[3px] outline-none" />
            </div>
          </div>
          <div className="mt-2 flex pl-2">
            <div className="flex w-24 flex-col gap-1">
              <button className={boxButton}>Edit...</button>
              <button className={boxButton}>Parameters...</button>
              <button className={boxButton}>Display Mesh...</button>
            </div>
            <div className="ml-3.5 flex flex-col items-start">
              <div className="flex gap-1 pl-1.5">
                <button className={`${boxButton} w-[54px]`}>Copy...</button>
                <button className={`${boxButton} w-[69px]`}>Profiles...</button>
              </div>
              <button className={`${boxButton} mt-3.5 w-[143px]`}>Operating Conditions...</button>
              <button disabled className="mt-2 flex h-[26px] w-[139px] items-center justify-center border border-[#999] whitespace-nowrap text-[#999]">Periodic Conditions...</button>
            </div>
          </div>
          <label className="mt-2 flex h-4 items-center gap-[5px]">
            <input type="checkbox" className="size-[13px] appearance-none border border-black" />
            Highlight Zone
          </label>
          <button className={`${boxButton} mt-[34px] mb-4 ml-2 w-[38px]`}>Help</button>
        </div>
        <div className="flex h-[13px] items-center justify-between pr-2 pl-2">
          <svg width="5" height="8" viewBox="0 0 5 8"><path d="M5 0v8L0 4z" /></svg>
          <div className="mr-auto ml-[7px] h-full w-[238px] bg-[#b9b9b9]" />
          <svg width="5" height="8" viewBox="0 0 5 8"><path d="M0 0v8l5-4z" /></svg>
        </div>
      </div>
    </section>
  );
}

function ViewTools() {
  return (
    <div className="flex w-[34px] shrink-0 flex-col items-center">
      <Dots className="mt-1" />
      <Tool label="Rotate view" selected className="mt-[3px]">
        <Svg>
          <path d="M4 5c2-3 6-3 9 0M12 11c-2 3-6 3-9 0" stroke="#222" strokeWidth="2" />
          <path d="M1 3l1 6 4-3zM15 13l-1-6-4 3z" fill="#222" />
        </Svg>
      </Tool>
      <Tool label="Pan">
        <Svg>
          <path d="M8 0 5.500 3h5zM8 16l-2.500-3h5zM0 8l3-2.500v5zM16 8l-3-2.500v5z" fill="#111" />
          <path d="M8 2v4M8 10v4M2 8h4M10 8h4" stroke="#111" />
        </Svg>
      </Tool>
      <Tool label="Zoom in and out"><Lens><path d="M6.500 2.500 9 5.500H4zM6.500 10.500 9 7.500H4z" fill="#111" /></Lens></Tool>
      <Tool label="Zoom in"><Lens><path d="M6.500 3.500v6M3.500 6.500h6" stroke="#111" strokeWidth="1.200" /></Lens></Tool>
      <Tool label="Probe">
        <Svg>
          <path d="M1 15l1-3 7-7 2 2-7 7z" fill="#cfcfcf" stroke="#222" />
          <path d="M8 4l4 4M10 6l4-4" stroke="#111" strokeWidth="3" />
        </Svg>
      </Tool>
      <Dots className="my-[5px]" />
      <Tool label="Fit to window"><Lens><path d="M3.500 5 6 3.500l4 .5v4.500L7 10 3.500 9z" fill="#4a66b8" stroke="#14224f" /></Lens></Tool>
      <Tool label="Previous view"><Lens><path d="M3 6.500 6 4v1.500h4v2H6V9z" stroke="#333" /></Lens></Tool>
      <Tool label="Orient view">
        <Svg>
          <path d="M9 9V2M9 9l-6 5M9 9l5 5" stroke="#222" />
          <path d="M9 0 6.500 3.500h5zM1 16l4-1-3-3zM16 16l-4-1 3-3z" fill="#222" />
          <path d="M1 0l1.500 2L4 0M2.500 2v2" stroke="#222" strokeWidth=".8" />
        </Svg>
      </Tool>
      <Tool label="Save picture">
        <Svg>
          <rect x=".5" y="3" width="15" height="10.500" fill="#c5ccd2" stroke="#7b858d" />
          <path d="M2 2.500h4" stroke="#59636b" strokeWidth="1.500" />
          <circle cx="7" cy="8.500" r="3.400" fill="#eceff1" stroke="#46505a" />
          <circle cx="7" cy="8.500" r="1.500" fill="#27313a" />
          <path d="M13 4v9" stroke="#46505a" />
        </Svg>
      </Tool>
      <Dots className="my-[5px]" />
      <Tool label="Lights">
        <svg width="24" height="16" viewBox="0 0 24 16" fill="none" aria-hidden="true">
          <path d="M1 5l4-3v9l-4 3z" fill="#2fc24b" stroke="#14401c" strokeWidth=".8" />
          <path d="M8 6c0-6 9-6 9-1 0 3-2 4-2 8M8.500 6l-1 3h1.500v2.500h3" stroke="#222" strokeWidth="1.300" />
          <path d="M9 4c2-4 8-3 8 1 0 2-1 3-2 4l-2-3z" fill="#222" />
          <path d="M17.500 6H24l-3.200 4z" fill="#111" />
        </svg>
      </Tool>
      <Dots className="my-[5px]" />
      <Tool label="Perspective" selected>
        <Svg>
          <path d="M2 5 6 2h9l-2 9-3 4H2z" fill="#e9e4dc" stroke="#222" />
          <path d="M2 5h9l-1 10M11 5l4-3" stroke="#222" />
        </Svg>
      </Tool>
      <Tool label="Orthographic">
        <Svg>
          <path d="M2 7l6-5h7v6l-5 6H2z" fill="#f0ece6" stroke="#222" />
          <path d="M2 7h8v7M10 7l5-5" stroke="#222" />
        </Svg>
      </Tool>
    </div>
  );
}

function Triad() {
  return (
    <svg width="84" height="82" viewBox="0 0 252 246" fill="none" aria-label="Axis triad">
      <path d="M128 56l24-18" stroke="#101070" strokeWidth="8" />
      <path d="M130 46l32-22-12 30z" fill="#101070" />
      <path d="M112 134l16 34" stroke="#a01010" strokeWidth="8" />
      <path d="M112 150l22-6 0 30z" fill="#7c1010" />
      <path d="M28 84l22-10v22z" fill="#137a20" />
      <path d="M46 80 82 42l46 6 16 50-40 36-38-6z" fill="#858585" stroke="#444" strokeWidth="3" />
      <path d="M46 80 82 42l46 6-36 34z" fill="#8a716e" />
      <path d="M92 82l36-34 16 50-40 36z" fill="#777" stroke="#444" strokeWidth="2" />
      <circle cx="82" cy="60" r="12" fill="#d01616" />
      <circle cx="72" cy="106" r="12" fill="#1c2cc0" />
      <circle cx="116" cy="88" r="12" fill="#18901f" />
      <text x="150" y="44" fontSize="40" fill="#2a2ae0" fontFamily="Liberation Sans">Z</text>
      <text x="10" y="98" fontSize="38" fill="#1ee02a" fontFamily="Liberation Sans">Y</text>
      <text x="122" y="194" fontSize="38" fill="#f01c2c" fontFamily="Liberation Sans">X</text>
      <path d="M206 166c14-18 20-34 22-50h-8l14-26 10 28h-8c-2 22-10 38-24 54zM178 200c-18 12-34 16-48 18l-2-8-30 16 26 10v-8c22-2 40-10 58-22z" fill="#f4f6fc" stroke="#888" strokeWidth="3" />
    </svg>
  );
}

function Graphics() {
  return (
    <section className="flex flex-1 flex-col">
      <div className="flex h-[18px] items-stretch bg-white">
        <svg width="9" height="18" viewBox="0 0 9 18" fill="none" aria-hidden="true"><path d="M.5 18C3 12 3 .5 9 .5" stroke="#000" /></svg>
        <div className="flex w-[638px] items-center border-t border-black">
          <FluentIcon size={15} className="ml-[3px]" />
          <span className="flex-1 text-center">Pathlines Colored by Particle ID</span>
          <button aria-label="Close view" className="mr-1 flex size-[13px] items-center justify-center border border-[#b84a32] bg-[#e8745a]">
            <Svg size={9} box={9}><path d="M1 1l7 7M8 1 1 8" stroke="#fff" strokeWidth="2" /></Svg>
          </button>
        </div>
        <svg width="9" height="18" viewBox="0 0 9 18" fill="none" aria-hidden="true"><path d="M8.500 18C6 12 6 .5 0 .5" stroke="#000" /></svg>
      </div>
      <div className="relative flex flex-1 items-start bg-linear-to-b from-[#6b8adc] to-white font-['Liberation_Sans',sans-serif] text-[14px] text-[#101830]">
        <div className="w-[325px] shrink-0 pt-[47px] pl-[2px] leading-[17px]">
          <p>pathlines-1</p>
          <p>Particle ID</p>
          <div className="mt-6 ml-[11px] flex gap-3">
            <div className="mt-[9px] mb-[9px] flex w-[26px] flex-col border border-[#555]">
              {bands.map((b) => <div key={b} className={`flex-1 ${b}`} />)}
            </div>
            <ol className="flex h-[513px] flex-col justify-between">
              {scaleLabels.map((l) => <li key={l} className="h-[18px] leading-[18px]">{l}</li>)}
            </ol>
          </div>
        </div>
        <svg width="570" height="450" viewBox="0 0 1568 1350" preserveAspectRatio="none" fill="none" className="mt-[93px] shrink-0" aria-label="Pathlines">
          {coreLines.map(([color, d], i) => (
            <path key={i} d={d} stroke={color} strokeWidth="1" vectorEffect="non-scaling-stroke" />
          ))}
          {lines.map(([color, d, dashed], i) => (
            <path key={i} d={d} stroke={color} strokeWidth="1" vectorEffect="non-scaling-stroke" strokeDasharray={dashed ? "3 2" : undefined} />
          ))}
          {scribbles.map(([color, d], i) => (
            <path key={i} d={d} stroke={color} strokeWidth="1" vectorEffect="non-scaling-stroke" />
          ))}
        </svg>
        <div className="absolute top-3 right-7 flex flex-col items-end font-['Noto_Sans',sans-serif] text-white">
          <span className="text-[29px] leading-9 font-semibold">ANSYS</span>
          <span className="-mt-0.5 text-[18px] leading-[18px]">R19.1</span>
          <span className="mt-[7px] h-0.5 w-24 bg-linear-to-r from-transparent via-white to-transparent" />
          <span className="w-24 text-center text-[16px] leading-[21px]">Academic</span>
          <span className="h-0.5 w-24 bg-linear-to-r from-transparent via-white to-transparent" />
        </div>
        <div className="absolute right-8 bottom-[18px]"><Triad /></div>
      </div>
    </section>
  );
}

function Console() {
  return (
    <section className="flex flex-col">
      <div className="flex h-[22px] items-center justify-between bg-[#f3f3f3] pr-[5px]">
        <h2>Console</h2>
        <div className="flex items-center gap-2">
          <button aria-label="Undock"><Svg size={9} box={9}><path d="M.5 3.500h5v5h-5zM2.500 3V.5h6v5H6M2.500 1.500h6M.5 4.500h5" stroke="#000" /></Svg></button>
          <button aria-label="Close console"><Svg size={9} box={9}><path d="M1 1l7 7M8 1 1 8" stroke="#000" strokeWidth="1.600" /></Svg></button>
        </div>
      </div>
      <div className="flex h-[104px] overflow-hidden border border-[#666] bg-white">
        <pre className="-mt-2 flex-1 pl-1 font-['Liberation_Mono',monospace] text-[13px] leading-4">
          {'Reading "\\"| gunzip -c \\"N:\\dos\\CFD\\HEAT_files\\dp0\\FFF-8\\Fluent\\FFF-8.1-1-00015.dat.gz\\"\\""...\n\n\nParallel variables...\nDone.\nnumber tracked = 142, escaped = 0, aborted = 0, trapped = 0, evaporated = 0, incomplete = 142, incomplete_parallel = 0'}
        </pre>
        <div className="flex w-3 flex-col items-center">
          <Caret className="mt-2 rotate-180" />
          <div className="mt-auto h-5 w-full bg-[#b9b9b9]" />
          <Caret className="my-[9px]" />
          <div className="flex h-3 w-full items-center justify-center border border-b-0 border-black">
            <Svg size={10} box={10}><path d="M1 5l3 3 5-6" stroke="#333" strokeWidth="1.200" /></Svg>
          </div>
        </div>
      </div>
    </section>
  );
}

function Taskbar() {
  return (
    <footer className="flex h-10 items-center bg-[#060b12] font-['Open_Sans',sans-serif] text-white">
      <button aria-label="Start" className="flex h-10 w-12 items-center justify-center">
        <Svg><path d="M0 2.300 7 1.300V7.500H0zM8 1.200 16 0v7.500H8zM0 8.500h7v6.200l-7-1zM8 8.500h8V16l-8-1.200z" fill="#fff" /></Svg>
      </button>
      <label className="flex h-10 w-[344px] items-center gap-2.5 bg-[#f2f2f2] pl-[9px]">
        <Svg size={21} box={21}><circle cx="10.500" cy="10.500" r="8.500" stroke="#111" strokeWidth="2.500" /></Svg>
        <input aria-label="Search" placeholder="Type here to search" className="flex-1 text-[15px] text-black outline-none placeholder:text-[#4a4a4a]" />
      </label>
      <TaskButton label="Task view">
        <Svg><path d="M.5 2V.5h9V2M.5 14v1.500h9V14M1.500 4.500h8v7h-8zM13.500 0v3M13.500 5v3M13.500 10v6M12 9h3" stroke="#fff" /></Svg>
      </TaskButton>
      <TaskButton label="Edge">
        <Svg size={22} box={22}>
          <path d="M1 11C2 4 6 1 11 1c6 0 9.500 4 9.500 9v2.500H8c.3 3 3 4.300 6 4.300 2 0 4-.5 5.500-1.500v4.500c-2 1-4 1.400-7 1.400-6 0-9-4-8.500-8.500C4.300 9 7 7 10 6 7 5.500 3 7 1 11zM8.300 9h7c0-2.500-1.300-3.800-3.300-3.800S8.600 6.500 8.300 9z" fill="#1a86dc" />
        </Svg>
      </TaskButton>
      <TaskButton label="File Explorer" running>
        <Svg size={22} box={22}>
          <path d="M1 3h8l2 2h10v14H1z" fill="#f7d774" />
          <path d="M1 7h20v12H1z" fill="#fbe596" />
          <path d="M4 12h14v8h-4v-4H8v4H4z" fill="#46a3dc" />
        </Svg>
      </TaskButton>
      <TaskButton label="Word" running>
        <Svg size={22} box={22}>
          <rect x="10" y="3" width="11" height="16" fill="#fff" />
          <path d="M12 6h7M12 9h7M12 12h7M12 15h7" stroke="#2b579a" />
          <path d="M0 2.500 13 0v22L0 19.500z" fill="#2b579a" />
          <path d="M3 7.500l1.500 7 2-6 2 6 1.500-7" stroke="#fff" strokeWidth="1.400" />
        </Svg>
      </TaskButton>
      <TaskButton label="Chrome" running>
        <Svg size={22} box={22}>
          <circle cx="11" cy="11" r="10.500" fill="#4caf50" />
          <path d="M11 11 2 5.500A10.500 10.500 0 0 1 20.500 6.500z" fill="#db4437" />
          <path d="M11 6.500h9.700A10.500 10.500 0 0 1 10.500 21.500L15 13z" fill="#ffcd40" />
          <circle cx="11" cy="11" r="4.800" fill="#fff" />
          <circle cx="11" cy="11" r="3.800" fill="#4285f4" />
        </Svg>
      </TaskButton>
      <TaskButton label="ANSYS Workbench" running>
        <Svg size={22} box={22}>
          <rect width="22" height="22" rx="1" fill="#f9c31c" />
          <path d="M0 22 5 0h5L5 22zM10 0h6l6 19v3h-4z" fill="#151515" />
          <path d="M10 0h1l3 9-3-2-3 15H5z" fill="#151515" />
        </Svg>
      </TaskButton>
      <TaskButton label="Fluent" active running><FluentIcon size={21} /></TaskButton>
      <div className="ml-auto flex items-center">
        <button aria-label="People">
          <Svg>
            <circle cx="11" cy="3.500" r="2.500" stroke="#fff" strokeWidth="1.200" />
            <circle cx="5" cy="8" r="2.300" stroke="#fff" strokeWidth="1.200" />
            <path d="M1 15.500c0-6 8-6 8 0M8.500 8c3-2.500 6-1 6 3" stroke="#fff" strokeWidth="1.200" />
          </Svg>
        </button>
        <button aria-label="Show hidden icons" className="ml-[22px]">
          <Svg size={12} box={12}><path d="M.5 9 6 3.500 11.500 9" stroke="#fff" strokeWidth="1.300" /></Svg>
        </button>
        <button aria-label="Network" className="ml-2.5">
          <Svg><path d="M6 2.500h9.500v8H4.500V7M.5 2.500h4v4h-4zM2.500 6.500V13M5 14.500h8M9 11v3.500" stroke="#fff" /></Svg>
        </button>
        <button aria-label="Volume" className="ml-2">
          <Svg>
            <path d="M.5 5.500h3l4-4v13l-4-4h-3z" stroke="#fff" />
            <path d="M9.500 5.500q1.500 2.500 0 5M11.500 4q2.500 4 0 8" stroke="#fff" />
            <path d="M13.500 2.500q3.500 5.500 0 11" stroke="#888" />
          </Svg>
        </button>
        <div className="ml-2.5 w-[60px] text-center text-[11px] leading-[18px] whitespace-nowrap">
          <div>12:23</div>
          <div>11/04/2019</div>
        </div>
        <button aria-label="Notifications" className="relative ml-[17px]">
          <Svg size={17} box={17}><path d="M0 0h17v13h-8l-4 4v-4H0z" fill="#fff" /><path d="M3 3.500h11M3 6.500h11M3 9.500h8" stroke="#111" /></Svg>
          <span className="absolute top-[7px] left-[7px] flex size-4 items-center justify-center rounded-full border border-[#999] bg-[#3a3f45] text-[10px]">2</span>
        </button>
        <div className="ml-5 h-10 w-[5px] border-l border-[#555]" />
      </div>
    </footer>
  );
}

export default function App() {
  return (
    <div className="flex min-h-screen flex-col bg-white font-['Noto_Sans',sans-serif] text-[12px] leading-[18px] text-black">
      <TitleBar />
      <QuickBar />
      <Tabs />
      <Ribbon />
      <main className="flex flex-1">
        <TreePanel />
        <TaskPage />
        <div className="ml-1 flex min-w-0 flex-1 flex-col">
          <div className="flex flex-1 pl-0.5">
            <ViewTools />
            <div className="ml-0.5 flex min-w-0 flex-1"><Graphics /></div>
          </div>
          <Console />
        </div>
      </main>
      <Taskbar />
    </div>
  );
}
